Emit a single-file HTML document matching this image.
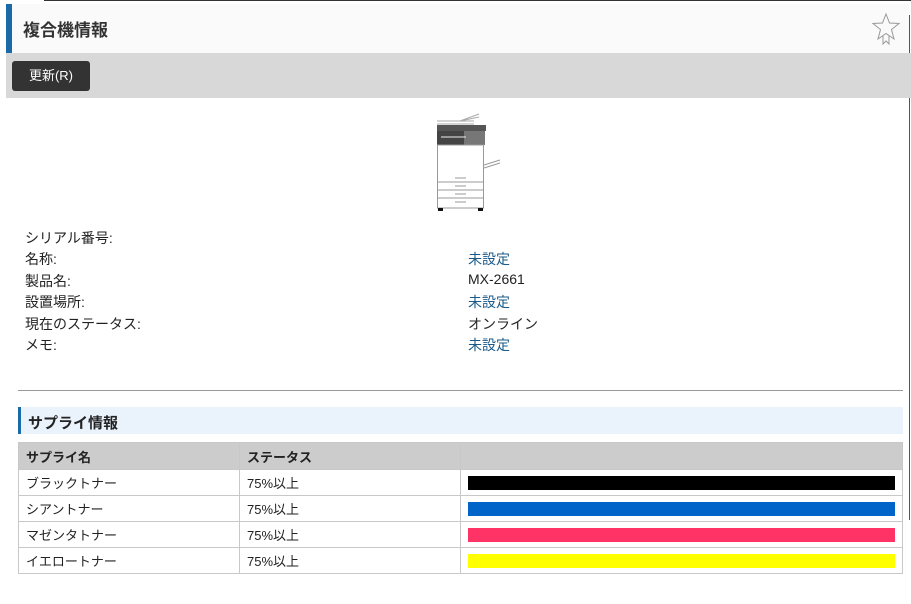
<!DOCTYPE html>
<html><head><meta charset="utf-8"><style>
body{margin:0;width:911px;height:604px;background:#fff;font-family:"Liberation Sans","Noto Sans CJK JP",sans-serif;color:#222;position:relative;overflow:hidden}
.a{position:absolute}
.lbl{position:absolute;left:25px;font-size:14px}
.val{position:absolute;left:468px;font-size:14px}
.blue{color:#1a5a8a}
table{position:absolute;left:18px;top:442px;width:885px;border-collapse:collapse;font-size:13px}
td,th{border:1px solid #c8c8c8;height:25px;padding:0 0 0 7px;text-align:left}
th{background:#ccc;font-weight:bold;height:26px}
.bar{height:14px;width:427px;margin-left:0}
</style></head><body>
<div class="a" style="left:44px;top:0;width:867px;height:1px;background:#333"></div>
<div class="a" style="left:909px;top:15px;width:1px;height:505px;background:#555"></div>
<div class="a" style="left:6px;top:4px;width:903px;height:49px;background:#fafafa"></div>
<div class="a" style="left:6px;top:4px;width:6px;height:49px;background:#1a6aa8"></div>
<div class="a" style="left:23px;top:16px;font-size:17px;font-weight:bold;color:#333">複合機情報</div>
<svg class="a" style="left:872px;top:12px" width="28" height="34" viewBox="0 0 28 34"><path d="M14 2 L17.5 11 L27 11.5 L19.5 17.5 L22 27 L14 21.5 L6 27 L8.5 17.5 L1 11.5 L10.5 11 Z M11 23.5 V32 L14 29 L17 32 V23.5" fill="none" stroke="#999" stroke-width="1"/></svg>
<div class="a" style="left:6px;top:53px;width:905px;height:45px;background:#d8d8d8"></div>
<div class="a" style="left:12px;top:61px;width:78px;height:30px;background:#333;border-radius:3px;color:#fff;font-size:13px;line-height:30px;text-align:center">更新(R)</div>
<svg class="a" style="left:436px;top:112px" width="66" height="99" viewBox="0 0 66 99">
<path d="M1 9 H38 M1 12 H38 M24 9 L43 2 M24 9 L43 5" stroke="#aaa" fill="none"/>
<rect x="1" y="13" width="49" height="6" fill="#555"/>
<rect x="1" y="19" width="36" height="14" fill="#444"/>
<rect x="28" y="19" width="21" height="14" fill="#777"/>
<path d="M5 25 H30" stroke="#eee"/>
<rect x="1.5" y="33" width="46" height="63" fill="#fff" stroke="#999"/>
<path d="M1 70 H48 M1 78 H48 M1 86 H48 M48 53 L64 48 M48 56 L64 51 M19 74 H30 M19 82 H30 M19 90 H30 M19 66 H30" stroke="#999" fill="none"/>
<rect x="2" y="96" width="5" height="3" fill="#111"/><rect x="42" y="96" width="5" height="3" fill="#111"/>
</svg>
<div class="lbl" style="top:228px">シリアル番号:</div>
<div class="lbl" style="top:249px">名称:</div><div class="val blue" style="top:249px">未設定</div>
<div class="lbl" style="top:271px">製品名:</div><div class="val" style="top:271px">MX-2661</div>
<div class="lbl" style="top:292px">設置場所:</div><div class="val blue" style="top:292px">未設定</div>
<div class="lbl" style="top:314px">現在のステータス:</div><div class="val" style="top:314px">オンライン</div>
<div class="lbl" style="top:335px">メモ:</div><div class="val blue" style="top:335px">未設定</div>
<div class="a" style="left:18px;top:390px;width:885px;height:1px;background:#999"></div>
<div class="a" style="left:18px;top:407px;width:885px;height:27px;background:#eaf2fc"></div>
<div class="a" style="left:18px;top:407px;width:3px;height:27px;background:#1a6aa8"></div>
<div class="a" style="left:28px;top:412px;font-size:15px;font-weight:bold;color:#222">サプライ情報</div>
<table>
<tr><th style="width:213px">サプライ名</th><th style="width:213px">ステータス</th><th></th></tr>
<tr><td>ブラックトナー</td><td>75%以上</td><td><div class="bar" style="background:#000"></div></td></tr>
<tr><td>シアントナー</td><td>75%以上</td><td><div class="bar" style="background:#0064c8"></div></td></tr>
<tr><td>マゼンタトナー</td><td>75%以上</td><td><div class="bar" style="background:#ff3366"></div></td></tr>
<tr><td>イエロートナー</td><td>75%以上</td><td><div class="bar" style="background:#ffff00"></div></td></tr>
</table>
</body></html>
